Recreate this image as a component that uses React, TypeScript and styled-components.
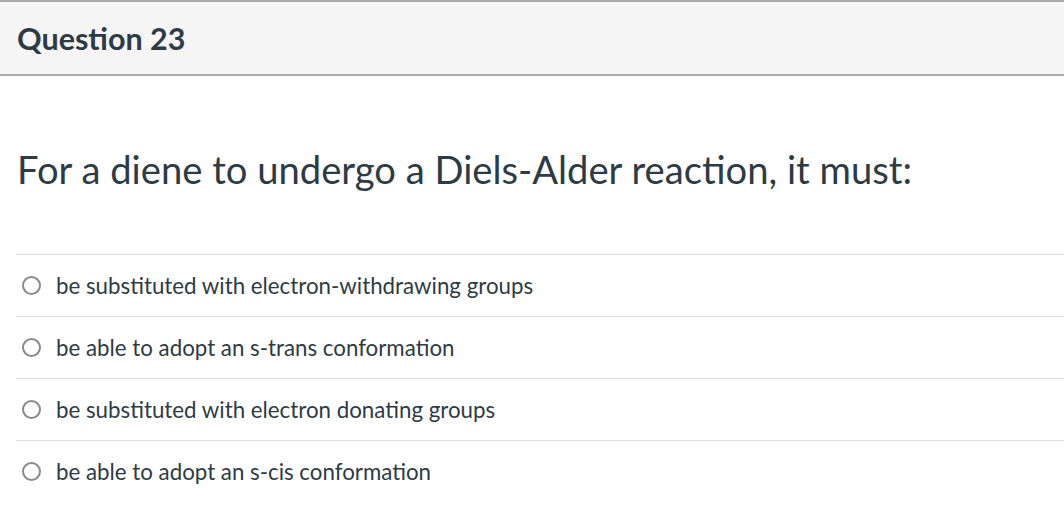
import styled, { createGlobalStyle } from "styled-components";

const GlobalStyle = createGlobalStyle`
    body {
        margin: 0;
        background: #fff;
        font-family: Lato, "Liberation Sans", sans-serif;
        color: #2d3b45;
    }
`;

const Page = styled.div`
    width: 1064px;
`;

const Header = styled.div`
    height: 72px;
    display: flex;
    align-items: center;
    padding-left: 17px;
    background: #f5f5f5;
    border-top: 2px solid #aaaaaa;
    border-bottom: 2px solid #aaaaaa;
`;

const Title = styled.h2`
    margin: 0;
    font-size: 30.5px;
    font-weight: 700;
`;

const Prompt = styled.p`
    margin: 0;
    padding: 68px 0 0 17px;
    height: 110px;
    font-size: 38.2px;
    line-height: 50px;
`;

const Answers = styled.div`
    margin-left: 16px;
`;

const Answer = styled.label`
    display: flex;
    align-items: center;
    gap: 15px;
    height: 61px;
    padding-left: 6px;
    border-top: 1px solid #dddddd;
    font-size: 22.3px;
`;

const Radio = styled.span`
    display: block;
    box-sizing: border-box;
    width: 19px;
    min-width: 19px;
    height: 19px;
    margin-top: -1px;
    border: 2px solid #8a8a8a;
    border-radius: 50%;
`;

const options = [
    "be substituted with electron-withdrawing groups",
    "be able to adopt an s-trans conformation",
    "be substituted with electron donating groups",
    "be able to adopt an s-cis conformation",
];

const App = () => {
    return (
        <Page>
            <GlobalStyle />
            <Header>
                <Title>Question 23</Title>
            </Header>
            <Prompt>For a diene to undergo a Diels-Alder reaction, it must:</Prompt>
            <Answers>
                {options.map((text) => (
                    <Answer key={text}>
                        <Radio />
                        {text}
                    </Answer>
                ))}
            </Answers>
        </Page>
    );
};

export default App;
